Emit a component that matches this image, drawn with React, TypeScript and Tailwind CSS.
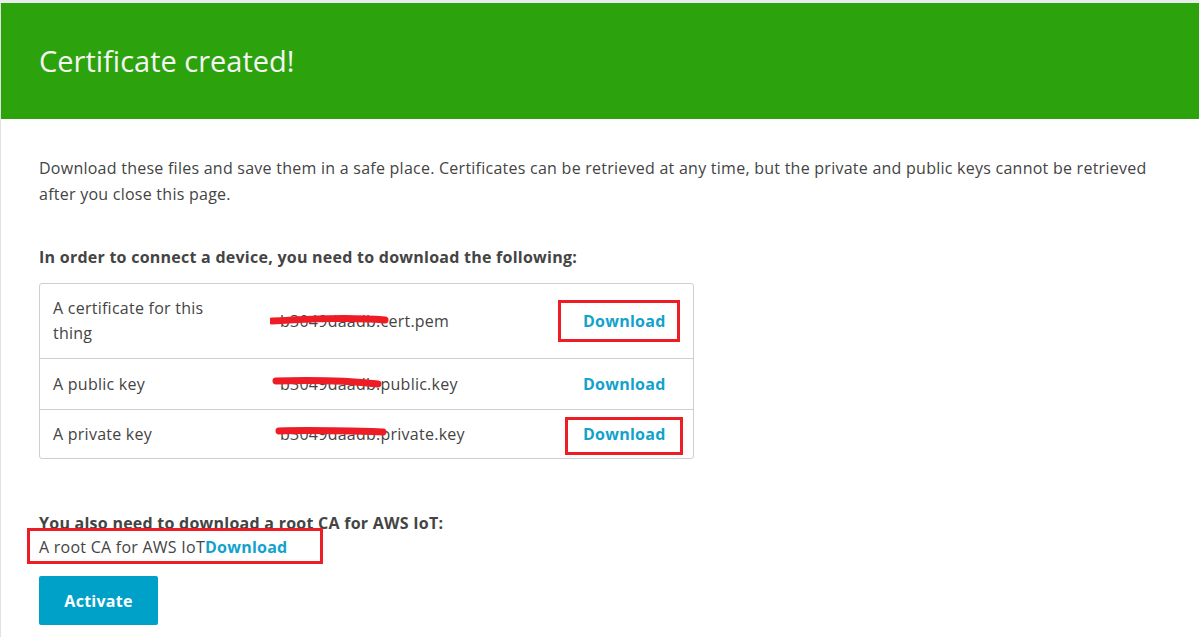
const files = [
  { label: "A certificate for this thing", name: "b3049daadb.cert.pem", rowH: "h-[74px]", box: "row1", scribble: "M2 34 C 40 32, 80 30, 115 33" },
  { label: "A public key", name: "b3049daadb.public.key", rowH: "h-[51px]", box: null, scribble: "M6 31 C 40 30, 80 31, 108 34" },
  { label: "A private key", name: "b3049daadb.private.key", rowH: "h-[49px]", box: "row3", scribble: "M9 31 C 40 30, 80 31, 113 32" },
];

export default function App() {
  return (
    <div className="min-h-screen bg-[#ececec] pt-[3px] font-['Open_Sans',sans-serif] tracking-[0.25px] text-[#444]">
      <div className="min-h-[634px] border-l border-[#e2e2e2] bg-white">
        {/* Green banner */}
        <div className="flex h-[116px] items-center bg-[#2ca20c] px-[38px]">
          <h1 className="text-[29px] tracking-normal text-[#f4f4f4]">Certificate created!</h1>
        </div>

        <div className="px-[38px] pt-[36px]">
          <p className="text-[16px] leading-[26px]">
            Download these files and save them in a safe place. Certificates can be retrieved at any time, but the private and public keys cannot be retrieved after you close this page.
          </p>

          <p className="mt-[37px] text-[16px] font-bold leading-[26px]">
            In order to connect a device, you need to download the following:
          </p>

          {/* Files table */}
          <div className="mt-[13px] w-[655px] rounded-[3px] border border-[#cfcfcf]">
            {files.map((f, i) => (
              <div
                key={f.name}
                className={`flex items-center ${f.rowH} ${i > 0 ? "border-t border-[#cfcfcf]" : ""}`}
              >
                <div className="w-[240px] pl-[13px] pr-[50px] text-[16px] leading-[25px]">{f.label}</div>
                <div className="relative flex-1 text-[16px] leading-[24px]">
                  <span>{f.name}</span>
                  <svg className="absolute left-[-10px] top-[-22px] h-[60px] w-[130px]" viewBox="0 0 130 60">
                    <path d={f.scribble} stroke="#ee1c25" strokeWidth="7" strokeLinecap="round" fill="none" />
                  </svg>
                </div>
                <div className="relative w-[110px] text-[16px] font-bold leading-[24px] text-[#12a2cc]">
                  Download
                  {f.box === "row1" && (
                    <div className="absolute left-[-25px] top-[-9px] h-[42px] w-[122px] border-[3px] border-[#ee1c25]" />
                  )}
                  {f.box === "row3" && (
                    <div className="absolute left-[-18px] top-[-5px] h-[38px] w-[118px] border-[3px] border-[#ee1c25]" />
                  )}
                </div>
              </div>
            ))}
          </div>

          <p className="mt-[51px] text-[16px] font-bold leading-[26px]">You also need to download a root CA for AWS IoT:</p>
          <div className="relative text-[16px] leading-[22px]">
            A root CA for AWS IoT<span className="font-bold text-[#12a2cc]">Download</span>
            <div className="absolute left-[-12px] top-[-8px] h-[36px] w-[296px] border-[3px] border-[#ee1c25]" />
          </div>

          <button className="mt-[18px] h-[49px] w-[119px] rounded-[2px] bg-[#00a1c9] text-[16px] font-bold text-white">
            Activate
          </button>
        </div>
      </div>
    </div>
  );
}
